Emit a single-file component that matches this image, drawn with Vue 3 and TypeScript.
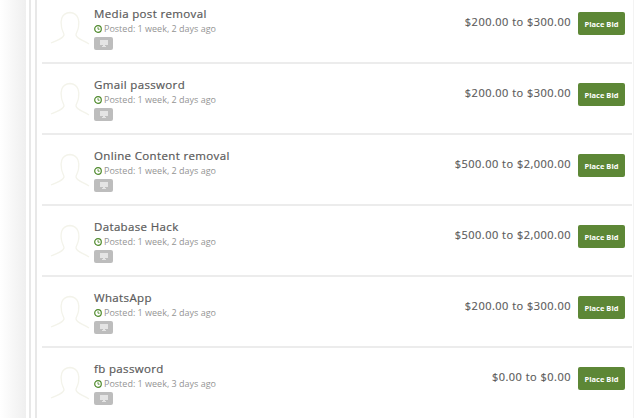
<script setup lang="ts">
interface Job { title: string; posted: string; price: string }
const jobs: Job[] = [
  { title: 'Media post removal', posted: 'Posted: 1 week, 2 days ago', price: '$200.00 to $300.00' },
  { title: 'Gmail password', posted: 'Posted: 1 week, 2 days ago', price: '$200.00 to $300.00' },
  { title: 'Online Content removal', posted: 'Posted: 1 week, 2 days ago', price: '$500.00 to $2,000.00' },
  { title: 'Database Hack', posted: 'Posted: 1 week, 2 days ago', price: '$500.00 to $2,000.00' },
  { title: 'WhatsApp', posted: 'Posted: 1 week, 2 days ago', price: '$200.00 to $300.00' },
  { title: 'fb password', posted: 'Posted: 1 week, 3 days ago', price: '$0.00 to $0.00' },
]
</script>

<template>
  <div class="page">
    <div class="side"></div>
    <div class="panel">
      <div class="list">
        <div v-for="j in jobs" :key="j.title" class="row">
          <svg class="avatar" width="40" height="40" viewBox="0 0 40 40" fill="none" stroke="#f3f3ea" stroke-width="1.3">
            <path d="M1 35 C7 32 13 31 14 27 C14 25 12 23 11.500 19 C10.500 14 10.500 5 20 4.500 C29 5 29.500 14 28.500 19 C28 23 26 25 26 27 C27 31 33 32 39 36" />
          </svg>
          <div class="info">
            <div class="title">{{ j.title }}</div>
            <div class="posted">
              <svg width="8" height="8" viewBox="0 0 8 8" fill="none" stroke="#4f8a2c" stroke-width="1.200">
                <circle cx="4" cy="4" r="3.300" />
                <path d="M4 2.200V4.200H5.600" stroke-width="0.900" />
              </svg>
              <span>{{ j.posted }}</span>
            </div>
            <div class="tag">
              <svg width="8" height="7" viewBox="0 0 8 7" fill="#e4e4e4">
                <path d="M0 0H8V5H5V6H6V7H2V6H3V5H0Z" />
              </svg>
            </div>
          </div>
          <div class="price">{{ j.price }}</div>
          <button class="bid" type="button">Place Bid</button>
        </div>
      </div>
    </div>
  </div>
</template>

<style>
html, body { margin: 0; background: #fff; overflow: hidden; }
</style>

<style scoped>
.page {
  width: 640px;
  height: 418px;
  display: flex;
  overflow: hidden;
  font-family: "Open Sans", sans-serif;
  background: #fff;
}
.side {
  width: 29px;
  flex: none;
  background: linear-gradient(to right, #ffffff, #efefef 26px, #ffffff 26px);
  border-right: 2px solid #e8e8e8;
}
.panel {
  width: 599px;
  flex: none;
  margin-left: 4px;
  border-left: 2px solid #e8e8e8;
  border-right: 1px solid #f3f3f3;
  box-sizing: border-box;
  padding-left: 5px;
}
.list { width: 590px; }
.row {
  box-sizing: border-box;
  border-bottom: 2px solid #ececec;
  padding: 0 7px 0 8px;
  display: flex;
  align-items: flex-start;
  height: 71px;
}
.row:first-child { height: 64px; }
.row:last-child { border-bottom: 0; }
.row:first-child .avatar { margin-top: 8px; }
.row:first-child .info { margin-top: 6px; }
.row:first-child .price { margin-top: 14px; }
.row:first-child .bid { margin-top: 12px; }
.avatar { margin-top: 15px; flex: none; }
.info { margin: 13px 0 0 4px; flex: 1; min-width: 0; }
.title {
  font-size: 11.500px;
  line-height: 16px;
  letter-spacing: 0.35px;
  color: #5a5a5a;
  -webkit-text-stroke: 0.2px #5a5a5a;
}
.posted {
  display: flex;
  align-items: center;
  gap: 2px;
  font-size: 9px;
  line-height: 14px;
  color: #949494;
}
.tag {
  width: 19px;
  height: 13px;
  margin-top: 1px;
  border-radius: 2px;
  background: #bdbdbd;
  display: flex;
  align-items: center;
  justify-content: center;
}
.price {
  margin-top: 21px;
  font-size: 11px;
  line-height: 16px;
  letter-spacing: 0.48px;
  color: #5a5a5a;
  -webkit-text-stroke: 0.15px #5a5a5a;
}
.bid {
  width: 47px;
  height: 23px;
  margin: 19px 0 0 7px;
  padding: 0;
  border: 0;
  border-radius: 2px;
  background: #5d8736;
  color: #fff;
  font-family: inherit;
  font-size: 7.500px;
  font-weight: 700;
}
</style>
